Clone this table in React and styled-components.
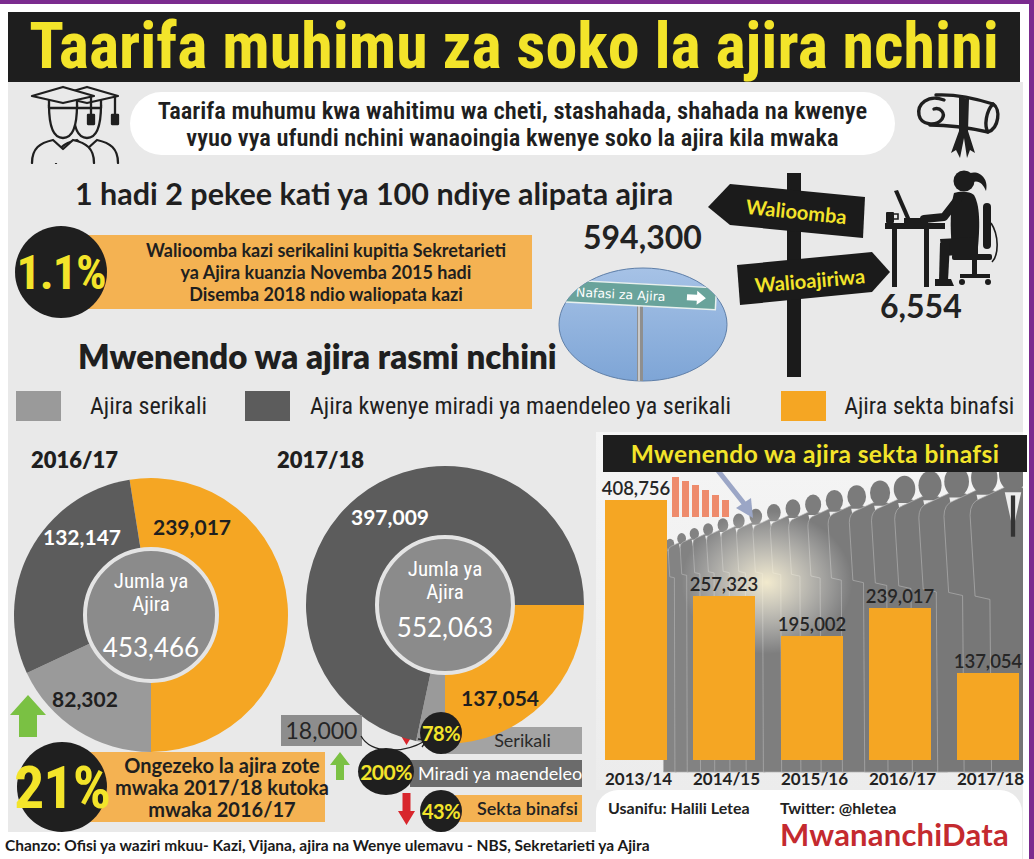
import React from "react";
import styled, { createGlobalStyle } from "styled-components";

const NARROW = `Roboto, "Liberation Sans", sans-serif`;
const HUMAN = `Lato, "Open Sans", "Liberation Sans", sans-serif`;

const YELLOW = "#f3e42a";
const ORANGE = "#f5a623";
const BOX_ORANGE = "#f4b252";
const INK = "#1f1f1f";

const GlobalStyle = createGlobalStyle`
  html, body {
    margin: 0;
    padding: 0;
    background: #fff;
  }
  body {
    font-family: ${HUMAN};
    overflow: hidden;
  }
`;

const Page = styled.div`
  width: 1034px;
  height: 859px;
  box-sizing: border-box;
  border-top: 4px solid #7b2b8f;
  border-right: 5px solid #7b2b8f;
  padding: 8px 6px 0 8px;
  background: #fff;
  display: flex;
  flex-direction: column;
  overflow: hidden;
`;

const Header = styled.h1`
  margin: 0 3px 0 0;
  height: 70px;
  background: #1e1e1e;
  color: ${YELLOW};
  font-family: ${NARROW};
  font-stretch: 75%;
  font-weight: 700;
  font-size: 64px;
  line-height: 70px;
  text-align: center;
  white-space: nowrap;
`;

const Main = styled.div`
  flex: 1;
  background: #e9e9e9;
  display: flex;
  flex-direction: column;
`;

/* ---------- intro ---------- */

const IntroRow = styled.div`
  height: 83px;
  display: grid;
  grid-template-columns: 122px 1fr 128px;
  align-items: center;
`;

const IconCell = styled.div`
  display: flex;
  justify-content: ${(p) => p.$justify || "center"};
  padding-left: ${(p) => p.$pad || 0}px;
`;

const Pill = styled.p`
  margin: 0;
  height: 63px;
  background: #fff;
  border-radius: 32px;
  display: flex;
  align-items: center;
  justify-content: center;
  text-align: center;
  font-family: ${NARROW};
  font-stretch: 75%;
  font-weight: 600;
  font-size: 24.5px;
  line-height: 27px;
  color: ${INK};
  white-space: nowrap;
`;

/* ---------- middle ---------- */

const Middle = styled.div`
  height: 220px;
  display: grid;
  grid-template-columns: 712px 1fr;
`;

const LeftCol = styled.div`
  display: flex;
  flex-direction: column;
`;

const Headline = styled.h2`
  margin: 12px 0 0;
  padding-left: 67px;
  font-size: 30.5px;
  line-height: 32px;
  font-weight: 700;
  color: ${INK};
  white-space: nowrap;
`;

const StatGrid = styled.div`
  display: grid;
  grid-template-columns: 550px 1fr;
`;

const StatCol = styled.div`
  display: flex;
  flex-direction: column;
`;

const StatRow = styled.div`
  display: flex;
  align-items: center;
  margin: ${(p) => p.$top || 0}px 0 0 ${(p) => p.$left || 0}px;
`;

const BigCircle = styled.div`
  width: ${(p) => p.$size}px;
  height: ${(p) => p.$size}px;
  flex: none;
  border-radius: 50%;
  background: ${INK};
  color: ${YELLOW};
  display: flex;
  align-items: center;
  justify-content: center;
  font-family: ${NARROW};
  font-stretch: 75%;
  font-weight: 700;
  font-size: ${(p) => p.$font}px;
  letter-spacing: -1px;
  position: relative;
  z-index: 1;
`;

const InfoBox = styled.div`
  margin-left: ${(p) => p.$overlap}px;
  width: ${(p) => p.$width}px;
  height: ${(p) => p.$height}px;
  box-sizing: border-box;
  padding-left: ${(p) => p.$pad}px;
  background: ${BOX_ORANGE};
  display: flex;
  align-items: center;
  justify-content: center;
  text-align: center;
  font-weight: 700;
  font-size: ${(p) => p.$font}px;
  line-height: ${(p) => p.$line}px;
  color: ${INK};
  white-space: nowrap;
`;

const SectionTitle = styled.h2`
  margin: 20px 0 0;
  padding-left: 70px;
  font-size: 33px;
  line-height: 36px;
  font-weight: 800;
  color: ${INK};
  white-space: nowrap;
`;

const Figure = styled.div`
  font-size: 32px;
  font-weight: 700;
  color: #222;
  line-height: 36px;
  margin: ${(p) => p.$top || 0}px 0 0 ${(p) => p.$left || 0}px;
`;

const RightCol = styled.div`
  display: flex;
  align-items: flex-start;
`;

const SignWrap = styled.div`
  margin: 5px 0 0 -20px;
`;

const WomanWrap = styled.div`
  margin-left: -15px;
  display: flex;
  flex-direction: column;
`;

/* ---------- legend ---------- */

const Legend = styled.div`
  margin-top: 5px;
  height: 32px;
  padding-left: 8px;
  display: flex;
  align-items: center;
  white-space: nowrap;
`;

const LegendItem = styled.div`
  display: flex;
  align-items: center;
  gap: ${(p) => p.$gap}px;
  margin-right: ${(p) => p.$after || 0}px;
  font-family: ${NARROW};
  font-stretch: 75%;
  font-size: 24px;
  color: ${INK};
`;

const Swatch = styled.span`
  width: 45px;
  height: 30px;
  background: ${(p) => p.$color};
`;

/* ---------- lower ---------- */

const Lower = styled.div`
  margin-top: 10px;
  display: grid;
  grid-template-columns: 588px 1fr;
  grid-template-rows: 358px 42px 27px;
`;

const LowerLeft = styled.div`
  grid-column: 1;
  grid-row: 1 / 3;
  padding-top: 14px;
  display: flex;
  flex-direction: column;
`;

const DonutRow = styled.div`
  height: 266px;
  display: flex;
  align-items: flex-start;
`;

const DonutBlock = styled.div`
  position: relative;
  margin-left: ${(p) => p.$left}px;
  display: flex;
  flex-direction: column;
`;

const Year = styled.div`
  padding: 2px 0 0 ${(p) => p.$pad}px;
  font-size: 22px;
  line-height: 24px;
  font-weight: 800;
  color: ${INK};
`;

const DonutSvg = styled.svg`
  display: block;
  margin: ${(p) => p.$top}px 0 0 ${(p) => p.$left}px;
`;

const Callout = styled.div`
  position: absolute;
  left: 4px;
  top: 269px;
  width: 81px;
  height: 31px;
  background: #8d8d8d;
  color: #262626;
  font-size: 23px;
  line-height: 31px;
  text-align: center;
`;

const CalloutArrow = styled.svg`
  position: absolute;
  left: 80px;
  top: 284px;
`;

const StatsRow = styled.div`
  height: 120px;
  display: flex;
  align-items: flex-start;
`;

const StatsLeft = styled.div`
  width: 322px;
  display: flex;
  flex-direction: column;
`;

const UpArrow = styled.svg`
  display: block;
  margin: -17px 0 0 2px;
`;

const ChangeList = styled.div`
  width: 252px;
  display: flex;
  flex-direction: column;
`;

const ChangeRow = styled.div`
  height: 40px;
  display: flex;
  align-items: flex-start;
  padding-left: ${(p) => p.$indent}px;
`;

const Pointer = styled.svg`
  flex: none;
  display: block;
  margin-top: ${(p) => p.$top || 0}px;
`;

const ChangeBadge = styled.div`
  flex: none;
  width: ${(p) => p.$w}px;
  height: ${(p) => p.$h}px;
  margin: ${(p) => p.$top}px 0 0 ${(p) => p.$left}px;
  border-radius: 50%;
  background: ${INK};
  color: ${YELLOW};
  display: flex;
  align-items: center;
  justify-content: center;
  font-size: ${(p) => p.$font}px;
  font-weight: 700;
  letter-spacing: -0.5px;
  position: relative;
  z-index: 1;
`;

const ChangeBar = styled.div`
  flex: 1;
  min-width: 0;
  height: 27px;
  margin: ${(p) => p.$top}px 0 0 ${(p) => p.$left}px;
  padding-left: ${(p) => p.$pad || 18}px;
  background: ${(p) => p.$bg};
  color: ${(p) => p.$fg};
  font-size: 18px;
  font-weight: ${(p) => p.$weight || 400};
  line-height: 27px;
  text-align: center;
  white-space: nowrap;
  overflow: hidden;
`;

/* ---------- bar chart ---------- */

const ChartPanel = styled.div`
  grid-column: 2;
  grid-row: 1;
  position: relative;
  background: linear-gradient(180deg, #f5f5f5 0%, #ececec 100%);
  display: flex;
  flex-direction: column;
`;

const Backdrop = styled.svg`
  position: absolute;
  left: 0;
  top: 0;
`;

const ChartTitle = styled.h3`
  position: relative;
  margin: 3px -4px 0 7px;
  height: 37px;
  background: #1e1e1e;
  color: ${YELLOW};
  font-size: 24.5px;
  font-weight: 700;
  line-height: 37px;
  text-align: center;
  letter-spacing: 0.4px;
  white-space: nowrap;
`;

const Bars = styled.div`
  position: relative;
  height: 288px;
  padding-left: 9px;
  display: flex;
  align-items: flex-end;
  gap: 26px;
`;

const BarCol = styled.div`
  width: 62px;
  display: flex;
  flex-direction: column;
  align-items: center;
`;

const BarValue = styled.span`
  font-size: 18.5px;
  font-weight: 600;
  color: #262626;
  line-height: 20px;
  margin-bottom: 2px;
  white-space: nowrap;
`;

const Bar = styled.div`
  width: 62px;
  background: ${ORANGE};
`;

const Years = styled.div`
  position: relative;
  margin-top: 8px;
  padding-left: 9px;
  display: flex;
  gap: 26px;
`;

const YearLabel = styled.span`
  width: 62px;
  text-align: center;
  font-size: 17px;
  font-weight: 700;
  color: #222;
  white-space: nowrap;
`;

const Credits = styled.div`
  grid-column: 2;
  grid-row: 2 / 4;
  background: #fff;
  border-radius: 22px 22px 0 0;
  margin-right: 1px;
  display: grid;
  grid-template-columns: 172px 1fr;
  align-content: start;
  row-gap: 2px;
  padding: 9px 0 0 12px;
`;

const CreditText = styled.span`
  font-size: 16px;
  font-weight: 700;
  line-height: 18px;
  color: #222;
`;

const Brand = styled.span`
  grid-column: 2;
  font-size: 31px;
  font-weight: 700;
  line-height: 30px;
  color: #c42a2f;
  letter-spacing: 0.2px;
`;

const Source = styled.div`
  grid-column: 1;
  grid-row: 3;
  z-index: 2;
  margin-left: -3px;
  background: #fff;
  font-size: 15.5px;
  font-weight: 700;
  line-height: 27px;
  color: #1a1a1a;
  white-space: nowrap;
`;

/* ---------- drawings ---------- */

const polar = (cx, cy, r, deg) => {
  const a = (deg * Math.PI) / 180;
  return [cx + r * Math.sin(a), cy - r * Math.cos(a)];
};

const wedge = (c, r, a0, a1) => {
  const [x0, y0] = polar(c, c, r, a0);
  const [x1, y1] = polar(c, c, r, a1);
  const large = a1 - a0 > 180 ? 1 : 0;
  return `M${c},${c} L${x0},${y0} A${r},${r} 0 ${large} 1 ${x1},${y1} Z`;
};

const Donut = ({ size, top, left, inner, segments, labels, center }) => {
  const c = size / 2;
  return (
    <DonutSvg $top={top} $left={left} width={size} height={size} viewBox={`0 0 ${size} ${size}`}>
      {segments.map((s) => (
        <path key={s.color + s.from} d={wedge(c, c - 1, s.from, s.to)} fill={s.color} />
      ))}
      <circle cx={c} cy={c} r={inner} fill="#8b8b8b" stroke="#e4e4e4" strokeWidth="4" />
      {labels.map((l) => (
        <text
          key={l.text}
          x={l.x}
          y={l.y}
          fill={l.color}
          fontFamily={HUMAN}
          fontWeight="700"
          fontSize="21"
          textAnchor="middle"
        >
          {l.text}
        </text>
      ))}
      <text x={c} y={center.y1} fill="#fff" fontFamily={NARROW} fontStretch="75%" fontSize="21" textAnchor="middle">
        <tspan x={c}>Jumla ya</tspan>
        <tspan x={c} dy="23">
          Ajira
        </tspan>
      </text>
      <text x={c} y={center.y2} fill="#fff" fontFamily={HUMAN} fontSize="26" textAnchor="middle">
        {center.total}
      </text>
    </DonutSvg>
  );
};

const GradPerson = ({ dx }) => (
  <g
    transform={`translate(${dx},0)`}
    stroke={INK}
    strokeWidth="2.3"
    fill="#e9e9e9"
    strokeLinejoin="round"
    strokeLinecap="round"
  >
    <path d="M6,79 C6,64 14,59 27,56 L37,65 L47,56 C60,59 68,64 68,79" />
    <path d="M23,21 C23,44 28,54 37,54 C46,54 51,44 51,21 Z" />
    <path d="M23,15 V24 H51 V15" />
    <polygon points="6,12 37,3 68,12 37,19" />
    <path d="M65,13 V31" fill="none" />
    <path d="M62,31 h6 v9 h-6 z" fill={INK} />
  </g>
);

const Graduates = () => (
  <svg width="100" height="80" viewBox="0 0 100 80">
    <GradPerson dx={26} />
    <GradPerson dx={2} />
  </svg>
);

const Diploma = () => (
  <svg width="90" height="74" viewBox="0 0 90 74">
    <g fill="none" stroke={INK} strokeWidth="3.4" strokeLinecap="round" strokeLinejoin="round">
      <path d="M30,13 C14,7 3,17 5,28 C7,38 22,40 28,32 C32,26 26,20 20,22" />
      <path d="M22,8 C40,7 60,11 79,17" />
      <path d="M16,38 C34,38 56,41 74,45" />
      <path d="M79,17 C87,22 85,41 74,45 C70,39 72,24 79,17" />
    </g>
    <path
      d="M45,10 L55,12 L54,44 L61,66 L56,63 L53,71 L50,51 L46,71 L42,63 L37,66 L45,44 Z"
      fill={INK}
    />
  </svg>
);

const Signposts = () => (
  <svg width="195" height="207" viewBox="0 0 195 207">
    <rect x="87" y="3" width="14" height="204" fill="#1b1b1b" />
    <polygon points="8,37 30,14 165,27 163,68 30,55" fill="#1b1b1b" />
    <text
      x="96"
      y="49"
      transform="rotate(6 96 44)"
      fill={YELLOW}
      fontFamily={HUMAN}
      fontWeight="700"
      fontSize="20"
      textAnchor="middle"
    >
      Walioomba
    </text>
    <polygon points="37,95 172,82 190,102 172,122 40,135" fill="#1b1b1b" />
    <text
      x="110"
      y="118"
      transform="rotate(-5 110 112)"
      fill={YELLOW}
      fontFamily={HUMAN}
      fontWeight="700"
      fontSize="20"
      textAnchor="middle"
    >
      Walioajiriwa
    </text>
  </svg>
);

const JobSign = () => (
  <svg width="170" height="115" viewBox="0 0 170 115">
    <defs>
      <linearGradient id="sky" x1="0" y1="0" x2="0" y2="1">
        <stop offset="0" stopColor="#a6c2e6" />
        <stop offset="1" stopColor="#7ea5d6" />
      </linearGradient>
      <clipPath id="oval">
        <ellipse cx="85" cy="57.5" rx="84" ry="56.5" />
      </clipPath>
    </defs>
    <ellipse cx="85" cy="57.5" rx="84" ry="56.5" fill="url(#sky)" stroke="#5f7fa8" strokeWidth="1" />
    <g clipPath="url(#oval)">
      <rect x="79" y="38" width="6" height="80" fill="#8f8f8f" />
      <rect x="80" y="38" width="2" height="80" fill="#c9c9c9" />
      <g transform="rotate(3 85 28)">
        <rect x="8" y="17" width="150" height="22" fill="#69a39b" stroke="#e8f0ee" strokeWidth="1.5" />
        <text x="18" y="33" fill="#fff" fontFamily={`"DejaVu Sans", sans-serif`} fontSize="12.5">
          Nafasi za Ajira
        </text>
        <path d="M129,25 h10 v-4 l9,7 l-9,7 v-4 h-10 z" fill="#fff" />
      </g>
    </g>
  </svg>
);

const Woman = () => (
  <svg width="120" height="125" viewBox="0 0 120 125">
    <g fill="#1c1c1c">
      <rect x="5" y="58" width="60" height="6" />
      <rect x="12" y="64" width="5" height="58" />
      <rect x="44" y="64" width="5" height="58" />
      <polygon points="14,26 18,25 31,55 27,56" />
      <rect x="24" y="53" width="24" height="5" />
      <rect x="6" y="47" width="8" height="11" rx="1" />
      <circle cx="84" cy="16" r="10.5" />
      <path d="M90,8 C100,5 109,14 106,26 C103,19 99,15 93,17 Z" />
      <path d="M74,28 C80,26 90,26 94,30 C100,40 100,60 98,82 L72,84 C70,64 70,42 74,28 Z" />
      <path d="M98,72 L98,89 L62,91 L60,74 Z" />
      <path d="M60,78 L70,78 L68,116 L59,116 Z" />
      <path d="M55,114 L71,114 L74,121 L55,121 Z" />
      <rect x="103" y="38" width="8" height="46" rx="4" />
      <rect x="72" y="89" width="40" height="6" rx="2" />
      <rect x="92" y="95" width="5" height="15" />
      <rect x="80" y="109" width="30" height="4" />
      <circle cx="82" cy="117" r="3" />
      <circle cx="108" cy="117" r="3" />
    </g>
    <path d="M78,34 L64,52 L44,54" fill="none" stroke="#1c1c1c" strokeWidth="8" strokeLinecap="round" strokeLinejoin="round" />
    <path d="M14,49 h4 v5 h-4" fill="none" stroke="#1c1c1c" strokeWidth="1.6" />
    <path d="M111,58 C119,70 119,90 112,97" fill="none" stroke="#1c1c1c" strokeWidth="1.6" />
  </svg>
);

const DownArrow = ({ top }) => (
  <Pointer $top={top} width="17" height="32" viewBox="0 0 17 32">
    <path d="M4.5,0 H12.5 V18 H17 L8.5,32 L0,18 H4.5 Z" fill="#d8262c" />
  </Pointer>
);

const SmallUp = () => (
  <Pointer width="20" height="28" viewBox="0 0 20 28">
    <path d="M6,28 V13 H0 L10,0 L20,13 H14 V28 Z" fill="#7bc143" />
  </Pointer>
);

const personPath = (x, y, s, bottom) =>
  `M${x - 5 * s},${y + 8 * s} L${x - 20 * s},${y + 15 * s} Q${x - 26 * s},${y + 17 * s} ${x - 26 * s},${y + 25 * s} ` +
  `L${x - 23 * s},${y + 74 * s} L${x - 14 * s},${y + 76 * s} L${x - 13 * s},${bottom} L${x + 13 * s},${bottom} ` +
  `L${x + 14 * s},${y + 76 * s} L${x + 23 * s},${y + 74 * s} L${x + 26 * s},${y + 25 * s} ` +
  `Q${x + 26 * s},${y + 17 * s} ${x + 20 * s},${y + 15 * s} L${x + 5 * s},${y + 8 * s} Z`;

const crowd = Array.from({ length: 18 }, (_, i) => {
  const t = i / 17;
  const g = Math.round(132 - 14 * t);
  return {
    x: 74 + 343 * (0.55 * t + 0.45 * t * t),
    y: 112 - 70 * Math.pow(t, 0.9),
    s: 0.5 + 1.15 * Math.pow(t, 1.5),
    color: `rgb(${g},${g},${g})`,
  };
});

const Crowd = () => (
  <Backdrop width="427" height="358" viewBox="0 0 427 358">
    <defs>
      <radialGradient id="glow" cx="0.4" cy="0.42" r="0.2">
        <stop offset="0" stopColor="#fff6d6" stopOpacity="0.9" />
        <stop offset="1" stopColor="#ffffff" stopOpacity="0" />
      </radialGradient>
    </defs>
    {crowd.map((p) => (
      <g key={p.x}>
        <path d={personPath(p.x, p.y, p.s, 340)} fill={p.color} stroke="#b0b0b0" strokeWidth="0.7" />
        <ellipse cx={p.x} cy={p.y} rx={8.5 * p.s} ry={10.5 * p.s} fill={p.color} />
        <polygon
          points={`${p.x - 5 * p.s},${p.y + 11 * p.s} ${p.x + 5 * p.s},${p.y + 11 * p.s} ${p.x},${p.y + 34 * p.s}`}
          fill="#ededed"
        />
        <path d={`M${p.x},${p.y + 13 * p.s} L${p.x},${p.y + 38 * p.s}`} stroke="#333" strokeWidth={2.6 * p.s} />
      </g>
    ))}
    <rect x="0" y="0" width="427" height="358" fill="url(#glow)" />
    <g fill="#ee8b6c">
      {[40, 36, 32, 27, 22, 17].map((h, i) => (
        <rect key={h} x={76 + i * 10} y={85 - h} width="7" height={h} />
      ))}
    </g>
    <path d="M74,8 L96,30 L112,26 L150,74" fill="none" stroke="#9ba6c6" strokeWidth="5" strokeLinejoin="round" />
    <path d="M140,76 L157,86 L155,66 Z" fill="#9ba6c6" />
  </Backdrop>
);

/* ---------- data ---------- */

const privateJobs = [
  { year: "2013/14", value: 408756 },
  { year: "2014/15", value: 257323 },
  { year: "2015/16", value: 195002 },
  { year: "2016/17", value: 239017 },
  { year: "2017/18", value: 137054 },
];

const fmt = (n) => n.toLocaleString("en-US");

const App = () => (
  <>
    <GlobalStyle />
    <Page>
      <Header>Taarifa muhimu za soko la ajira nchini</Header>
      <Main>
        <IntroRow>
          <IconCell $justify="flex-start" $pad={16}>
            <Graduates />
          </IconCell>
          <Pill>
            Taarifa muhumu kwa wahitimu wa cheti, stashahada, shahada na kwenye
            <br />
            vyuo vya ufundi nchini wanaoingia kwenye soko la ajira kila mwaka
          </Pill>
          <IconCell>
            <Diploma />
          </IconCell>
        </IntroRow>

        <Middle>
          <LeftCol>
            <Headline>1 hadi 2 pekee kati ya 100 ndiye alipata ajira</Headline>
            <StatGrid>
              <StatCol>
                <StatRow $top={17} $left={7}>
                  <BigCircle $size={92} $font={48}>
                    1.1%
                  </BigCircle>
                  <InfoBox $overlap={-27} $width={452} $height={74} $pad={40} $font={18} $line={22}>
                    Walioomba kazi serikalini kupitia Sekretarieti
                    <br />
                    ya Ajira kuanzia Novemba 2015 hadi
                    <br />
                    Disemba 2018 ndio waliopata kazi
                  </InfoBox>
                </StatRow>
                <SectionTitle>Mwenendo wa ajira rasmi nchini</SectionTitle>
              </StatCol>
              <StatCol>
                <Figure $top={10} $left={25}>
                  594,300
                </Figure>
                <StatRow $top={12}>
                  <JobSign />
                </StatRow>
              </StatCol>
            </StatGrid>
          </LeftCol>
          <RightCol>
            <SignWrap>
              <Signposts />
            </SignWrap>
            <WomanWrap>
              <Woman />
              <Figure $top={-2}>6,554</Figure>
            </WomanWrap>
          </RightCol>
        </Middle>

        <Legend>
          <LegendItem $gap={29} $after={38}>
            <Swatch $color="#9a9a9a" />
            Ajira serikali
          </LegendItem>
          <LegendItem $gap={20} $after={50}>
            <Swatch $color="#5c5c5c" />
            Ajira kwenye miradi ya maendeleo ya serikali
          </LegendItem>
          <LegendItem $gap={18}>
            <Swatch $color={ORANGE} />
            Ajira sekta binafsi
          </LegendItem>
        </Legend>

        <Lower>
          <LowerLeft>
            <DonutRow>
              <DonutBlock $left={5}>
                <Year $pad={18}>2016/17</Year>
                <Donut
                  size={276}
                  top={5}
                  left={0}
                  inner={66}
                  segments={[
                    { from: -9, to: 180, color: ORANGE },
                    { from: 180, to: 245, color: "#9a9a9a" },
                    { from: 245, to: 351, color: "#5c5c5c" },
                  ]}
                  labels={[
                    { x: 179, y: 58, text: "239,017", color: INK },
                    { x: 69, y: 68, text: "132,147", color: "#fff" },
                    { x: 72, y: 230, text: "82,302", color: INK },
                  ]}
                  center={{ y1: 111, y2: 180, total: "453,466" }}
                />
              </DonutBlock>
              <DonutBlock $left={-12}>
                <Year $pad={0}>2017/18</Year>
                <Donut
                  size={280}
                  top={-7}
                  left={28}
                  inner={68}
                  segments={[
                    { from: 90, to: 180, color: ORANGE },
                    { from: 180, to: 192, color: "#9a9a9a" },
                    { from: 192, to: 450, color: "#5c5c5c" },
                  ]}
                  labels={[
                    { x: 85, y: 60, text: "397,009", color: "#fff" },
                    { x: 195, y: 241, text: "137,054", color: INK },
                  ]}
                  center={{ y1: 111, y2: 172, total: "552,063" }}
                />
                <Callout>18,000</Callout>
                <CalloutArrow width="80" height="26" viewBox="0 0 80 26">
                  <path d="M4,6 C14,24 46,24 68,11" fill="none" stroke="#222" strokeWidth="1.3" />
                  <path d="M61,9 L70,10 L65,17" fill="none" stroke="#222" strokeWidth="1.3" />
                </CalloutArrow>
              </DonutBlock>
            </DonutRow>

            <StatsRow>
              <StatsLeft>
                <UpArrow width="36" height="42" viewBox="0 0 36 42">
                  <path d="M9,42 V20 H0 L18,0 L36,20 H27 V42 Z" fill="#7ac143" />
                </UpArrow>
                <StatRow $top={5} $left={9}>
                  <BigCircle $size={90} $font={60}>
                    21%
                  </BigCircle>
                  <InfoBox $overlap={-22} $width={240} $height={70} $pad={34} $font={20} $line={22}>
                    Ongezeko la ajira zote
                    <br />
                    mwaka 2017/18 kutoka
                    <br />
                    mwaka 2016/17
                  </InfoBox>
                </StatRow>
              </StatsLeft>
              <ChangeList>
                <ChangeRow $indent={68}>
                  <DownArrow top={1} />
                  <ChangeBadge $w={42} $h={42} $top={0} $left={5} $font={20}>
                    78%
                  </ChangeBadge>
                  <ChangeBar $top={15} $left={-17} $bg="#a3a3a3" $fg="#2a2a2a">
                    Serikali
                  </ChangeBar>
                </ChangeRow>
                <ChangeRow $indent={0}>
                  <SmallUp />
                  <ChangeBadge $w={56} $h={47} $top={-4} $left={8} $font={21}>
                    200%
                  </ChangeBadge>
                  <ChangeBar $top={8} $left={-4} $pad={8} $bg="#6b6b6b" $fg="#fff">
                    Miradi ya maendeleo
                  </ChangeBar>
                </ChangeRow>
                <ChangeRow $indent={68}>
                  <DownArrow top={1} />
                  <ChangeBadge $w={42} $h={42} $top={-2} $left={5} $font={20}>
                    43%
                  </ChangeBadge>
                  <ChangeBar $top={3} $left={-7} $bg={BOX_ORANGE} $fg="#222" $weight={600}>
                    Sekta binafsi
                  </ChangeBar>
                </ChangeRow>
              </ChangeList>
            </StatsRow>
          </LowerLeft>

          <ChartPanel>
            <Crowd />
            <ChartTitle>Mwenendo wa ajira sekta binafsi</ChartTitle>
            <Bars>
              {privateJobs.map((d) => (
                <BarCol key={d.year}>
                  <BarValue>{fmt(d.value)}</BarValue>
                  <Bar style={{ height: `${Math.round(d.value * 0.000636)}px` }} />
                </BarCol>
              ))}
            </Bars>
            <Years>
              {privateJobs.map((d) => (
                <YearLabel key={d.year}>{d.year}</YearLabel>
              ))}
            </Years>
          </ChartPanel>

          <Credits>
            <CreditText>Usanifu: Halili Letea</CreditText>
            <CreditText>Twitter: @hletea</CreditText>
            <Brand>MwananchiData</Brand>
          </Credits>

          <Source>
            Chanzo: Ofisi ya waziri mkuu- Kazi, Vijana, ajira na Wenye ulemavu - NBS, Sekretarieti ya Ajira
          </Source>
        </Lower>
      </Main>
    </Page>
  </>
);

export default App;
